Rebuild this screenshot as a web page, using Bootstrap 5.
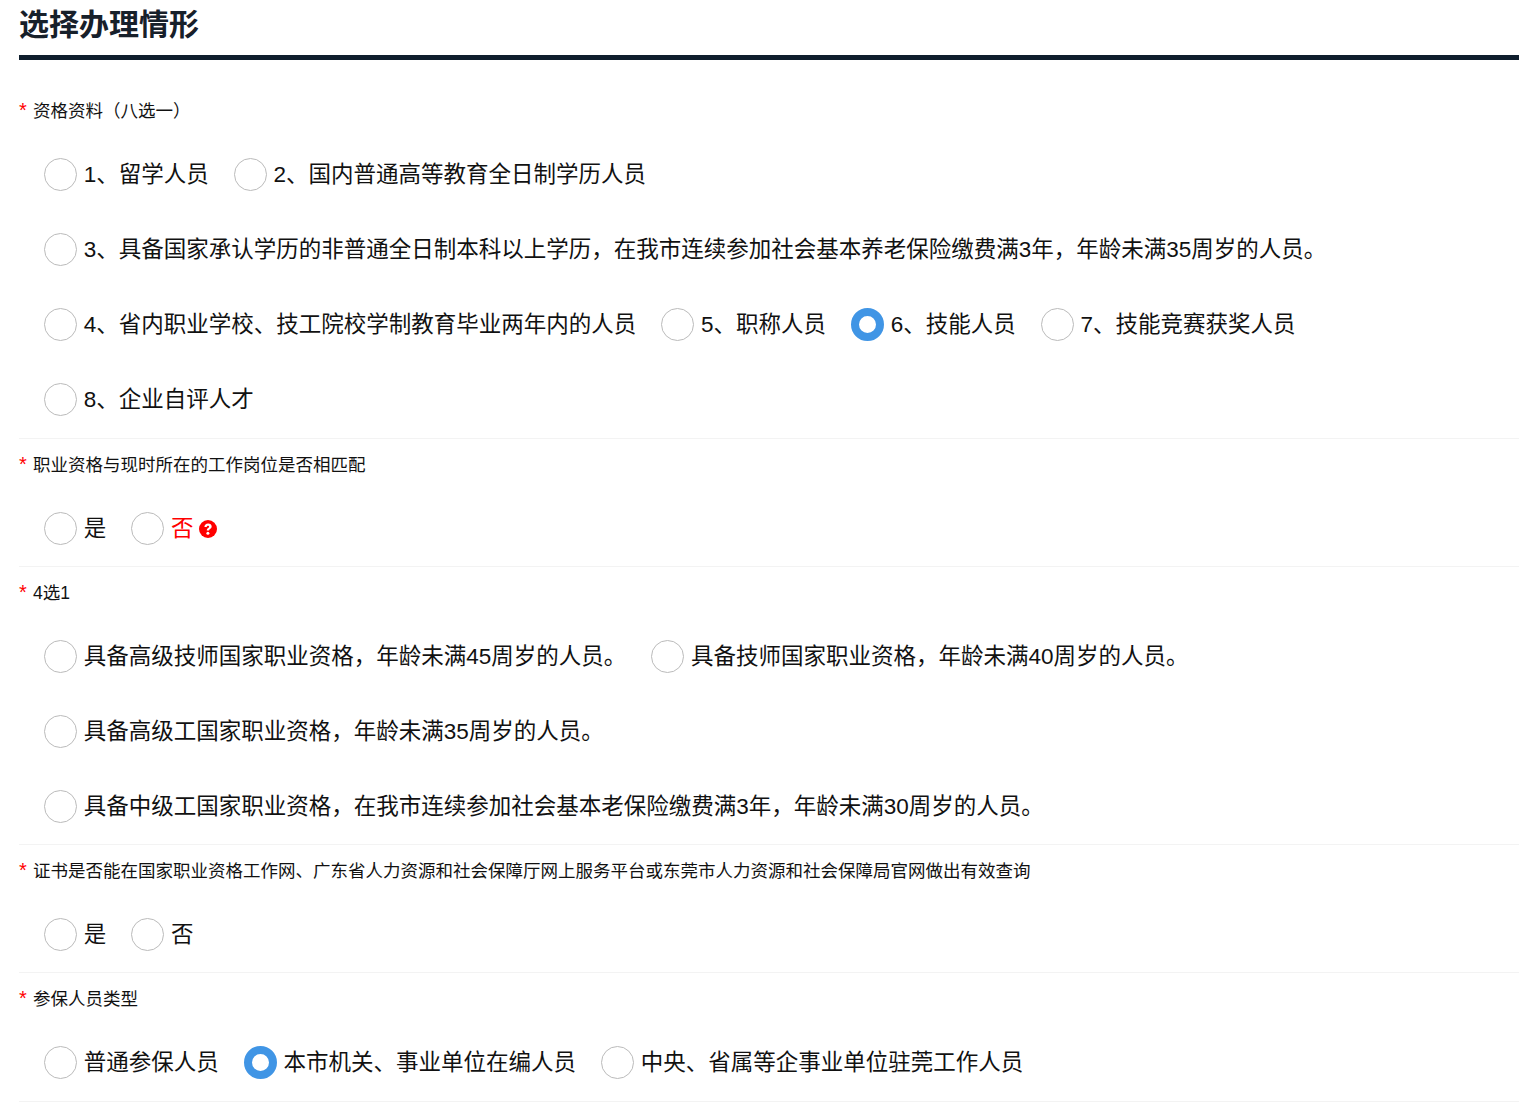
<!DOCTYPE html>
<html lang="zh-CN">
<head>
<meta charset="utf-8">
<title>选择办理情形</title>
<link rel="stylesheet" href="https://cdn.jsdelivr.net/npm/bootstrap@5.3.0/dist/css/bootstrap.min.css">
<style>
body{font-family:"Liberation Sans","Noto Sans CJK SC",sans-serif;color:#000;background:#fff;}
.sheet{padding:0 15px 0 19px;}
.sheet-title{font-size:30px;line-height:50px;font-weight:700;color:#17202a;margin:0;height:55px;}
.title-rule{height:5px;background:#0f1e2d;margin-bottom:25px;}
.field-block{border-bottom:1px solid #f3f3f3;}
.block-pad{padding-bottom:1px;}
.field-label{font-size:17.5px;line-height:52px;height:52px;color:#111;display:flex;}
.req{color:#f00;width:14px;flex:none;font-size:20px;line-height:50px;}
.opts{display:flex;flex-wrap:wrap;padding-left:25px;}
.opt{display:inline-flex;align-items:center;height:75px;margin-right:25px;font-size:22.5px;white-space:nowrap;color:#111;cursor:pointer;}
.dot{width:33px;height:33px;border-radius:50%;border:1px solid #bbb;background:#fff;margin-right:6.75px;flex:none;}
.dot-on{border:8px solid #4095e5;}
.opts .opt-warn{color:#f00;}
.tip-icon{margin-left:5.5px;flex:none;}
.break-row{flex-basis:100%;height:0;}
</style>
</head>
<body>
<div class="sheet">
  <h2 class="sheet-title">选择办理情形</h2>
  <div class="title-rule"></div>

  <div class="field-block block-pad">
    <div class="field-label"><span class="req">*</span><span>资格资料（八选一）</span></div>
    <div class="opts">
      <label class="opt"><span class="dot"></span>1、留学人员</label>
      <label class="opt"><span class="dot"></span>2、国内普通高等教育全日制学历人员</label>
      <div class="break-row"></div>
      <label class="opt"><span class="dot"></span>3、具备国家承认学历的非普通全日制本科以上学历，在我市连续参加社会基本养老保险缴费满3年，年龄未满35周岁的人员。</label>
      <div class="break-row"></div>
      <label class="opt"><span class="dot"></span>4、省内职业学校、技工院校学制教育毕业两年内的人员</label>
      <label class="opt"><span class="dot"></span>5、职称人员</label>
      <label class="opt"><span class="dot dot-on"></span>6、技能人员</label>
      <label class="opt"><span class="dot"></span>7、技能竞赛获奖人员</label>
      <div class="break-row"></div>
      <label class="opt"><span class="dot"></span>8、企业自评人才</label>
    </div>
  </div>

  <div class="field-block">
    <div class="field-label"><span class="req">*</span><span>职业资格与现时所在的工作岗位是否相匹配</span></div>
    <div class="opts">
      <label class="opt"><span class="dot"></span>是</label>
      <label class="opt opt-warn"><span class="dot"></span>否<svg class="tip-icon" width="18" height="18" viewBox="0 0 18 18"><circle cx="9" cy="9" r="9" fill="#f00"/><path d="M5.400 6.900c.1-2.100 1.600-3.400 3.700-3.400 2.100 0 3.600 1.200 3.600 3 0 1.300-.8 2-1.600 2.500-.7.500-1 .8-1 1.600H7.800c0-1.400.4-2 1.300-2.600.7-.5 1-.8 1-1.300 0-.6-.5-1-1.100-1-.7 0-1.200.5-1.300 1.200z" fill="#fff"/><circle cx="8.900" cy="13.200" r="1.500" fill="#fff"/></svg></label>
    </div>
  </div>

  <div class="field-block">
    <div class="field-label"><span class="req">*</span><span>4选1</span></div>
    <div class="opts">
      <label class="opt"><span class="dot"></span>具备高级技师国家职业资格，年龄未满45周岁的人员。</label>
      <label class="opt"><span class="dot"></span>具备技师国家职业资格，年龄未满40周岁的人员。</label>
      <div class="break-row"></div>
      <label class="opt"><span class="dot"></span>具备高级工国家职业资格，年龄未满35周岁的人员。</label>
      <div class="break-row"></div>
      <label class="opt"><span class="dot"></span>具备中级工国家职业资格，在我市连续参加社会基本老保险缴费满3年，年龄未满30周岁的人员。</label>
    </div>
  </div>

  <div class="field-block">
    <div class="field-label"><span class="req">*</span><span>证书是否能在国家职业资格工作网、广东省人力资源和社会保障厅网上服务平台或东莞市人力资源和社会保障局官网做出有效查询</span></div>
    <div class="opts">
      <label class="opt"><span class="dot"></span>是</label>
      <label class="opt"><span class="dot"></span>否</label>
    </div>
  </div>

  <div class="field-block block-pad">
    <div class="field-label"><span class="req">*</span><span>参保人员类型</span></div>
    <div class="opts">
      <label class="opt"><span class="dot"></span>普通参保人员</label>
      <label class="opt"><span class="dot dot-on"></span>本市机关、事业单位在编人员</label>
      <label class="opt"><span class="dot"></span>中央、省属等企事业单位驻莞工作人员</label>
    </div>
  </div>
</div>
<script src="https://cdn.jsdelivr.net/npm/bootstrap@5.3.0/dist/js/bootstrap.bundle.min.js"></script>
</body>
</html>
